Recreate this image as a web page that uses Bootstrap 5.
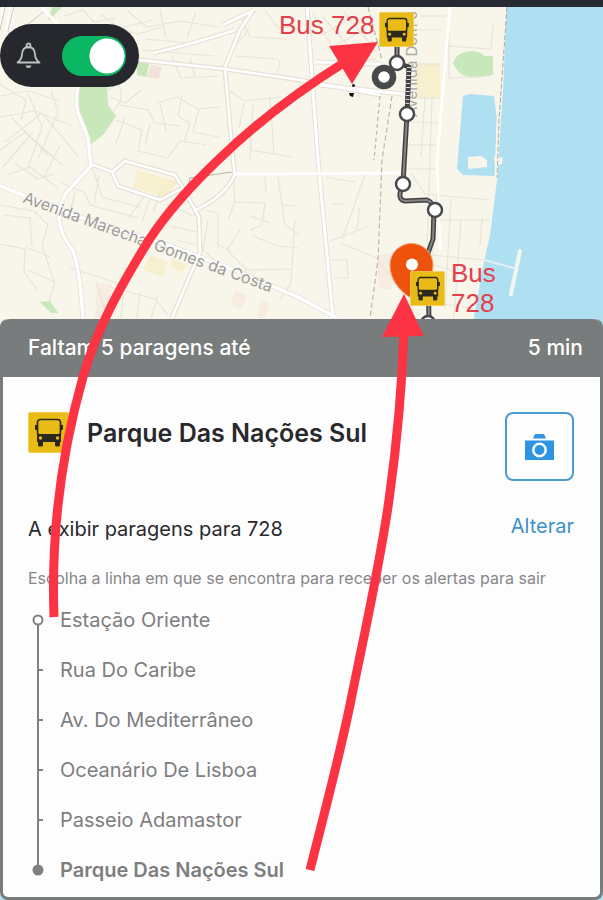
<!DOCTYPE html>
<html lang="pt">
<head>
<meta charset="utf-8">
<meta name="viewport" content="width=device-width, initial-scale=1">
<title>Parque Das Nações Sul</title>
<link rel="stylesheet" href="https://cdn.jsdelivr.net/npm/bootstrap@5.3.0/dist/css/bootstrap.min.css">
<style>
  body { font-family: Inter, "Noto Sans", sans-serif; background: #aee0f2; }
  .status-strip { height: 7px; background: #282a33; }
  .map-area { min-height: 312px; background: #f8f5ea; }
  .map-canvas { top: 0; left: 0; width: 100%; height: 328px; }
  .alert-pill { background: #26282e; width: 139px; height: 63px; margin-top: 17px; padding: 0 13px 0 16px; }
  .alert-pill .form-check-input {
    width: 64px; height: 40px; border: 0; background-color: #0bb763;
    background-image: radial-gradient(circle at 45px 20px, #fff 17px, transparent 18px);
    background-position: 0 0; background-size: 100% 100%;
  }
  .alert-pill .form-check-input:checked { background-image: radial-gradient(circle at 45px 20px, #fff 17px, transparent 18px); background-position: 0 0; }
  .alert-pill .form-check-input:not(:checked) { background-image: radial-gradient(circle at 19px 20px, #fff 17px, transparent 18px); background-color: #777; }
  .street-label { font: 16px Inter, sans-serif; fill: #9c9b99; }
  .street-label-sm { font: 15px Inter, sans-serif; fill: #aaa9a7; }
  .note-label { font: 26px "Liberation Sans", Arial, sans-serif; fill: #e2414b; }
  .stop-panel { background: #fdfdfd; border: 3px solid #797c7c; border-top: 0; border-radius: 8px; }
  .stop-header { background: #797c7c; height: 58px; padding: 0 18px 0 26px; font-size: 21px; font-weight: 500; border-radius: 8px 8px 0 0; margin: 0 -1px; }
  .stop-body { padding: 35px 26px 2px 25px; }
  .stop-title { font-size: 25px; font-weight: 600; line-height: 42px; color: #29292c; padding-left: 18px; }
  .bus-badge { width: 41px; height: 41px; }
  .photo-btn { width: 69px; height: 69px; border: 2px solid #4b9bd2; border-radius: 8px; }
  .line-row { height: 50px; margin-top: 23px; font-size: 20px; color: #29292c; }
  .change-link { color: #3d92c5; padding-bottom: 6px; }
  .hint { margin: 12px 0 5px; font-size: 16px; line-height: 24px; color: #868688; }
  .stop-row { height: 50px; gap: 14px; font-size: 20px; color: #7e7e80; }
  .stop-row svg { width: 18px; height: 50px; flex: none; }
  .arrow-layer { top: 0; left: 0; width: 100%; height: 100%; pointer-events: none; z-index: 5; }
</style>
<script src="https://cdn.jsdelivr.net/npm/bootstrap@5.3.0/dist/js/bootstrap.bundle.min.js"></script>
</head>
<body>
<svg class="d-none" aria-hidden="true">
  <symbol id="bus" viewBox="0 0 41 41">
    <rect x=".5" y=".5" width="40" height="40" rx="1.5" fill="#e9bb17" stroke="#f3cf53"/>
    <rect x="9.5" y="7.5" width="23" height="16" rx="3" fill="none" stroke="#2b291d" stroke-width="1.7"/>
    <path d="M9 22h24v8H9zM10 29h5v4q0 1.500-1.500 1.500h-2q-1.500 0-1.500-1.500zM27 29h5v4q0 1.500-1.500 1.500h-2q-1.500 0-1.500-1.500zM7 13h3v5H8.500Q7 18 7 16.500zM32 13h3v3.500q0 1.500-1.500 1.500H32z" fill="#2b291d"/>
    <circle cx="12.500" cy="26" r="1.700" fill="#e9bb17"/><circle cx="29.500" cy="26" r="1.700" fill="#e9bb17"/>
  </symbol>
</svg>

<div class="position-relative min-vh-100 d-flex flex-column">
  <div class="status-strip"></div>

  <section class="map-area position-relative flex-grow-1" aria-label="Mapa">
    <svg class="map-canvas position-absolute" viewBox="0 7 603 328" preserveAspectRatio="xMidYMid slice">
      <rect y="7" width="603" height="328" fill="#f8f5ea"/>
      <!-- parks and blocks -->
      <g fill="#c9e8b9">
        <path d="M77 84L107 82 108 105 116 116 104 134 90 145 86 125 77 110Z"/>
        <path d="M137 62L150 62 146 77 137 75Z"/>
        <path d="M48 19L52 7 62 7 50 20Z"/>
        <path d="M40 302L50 301 58 313 51 313Z"/>
        <path d="M453 63Q457 52 470 51 480 51 485 56L493 56 493 75 485 76Q478 79 468 77 457 74 453 63Z"/>
      </g>
      <g fill="#f8efcf">
        <path d="M137 170L178 182 165 198 133 187Z"/>
        <path d="M416 63H440V98H416Z"/>
        <path d="M150 255L168 262 163 277 143 270Z"/>
        <path d="M172 259L188 265 182 272 170 267Z"/>
      </g>
      <g fill="#f6ecdf"><path d="M97 283L112 285 108 318H95Z"/><path d="M235 290L247 295 241 309 230 305Z"/><path d="M260 300L270 303 265 318H257Z"/><path d="M378 255L393 252 392 290 378 287Z"/></g>
      <path d="M151 65L162 67 159 79 147 77Z" fill="#f3e2dc"/>
      <!-- minor streets -->
      <g fill="none" stroke="#e8e4d9" stroke-width="1.200">
        <path d="M65 16L83 10 94 22 116 18M78 24Q92 37 112 27L138 34 165 26M100 14L120 28 153 20M127 10L147 27 180 21 219 27M160 10L166 37M196 12L187 38M145 39L190 43M142 50L215 56M172 57L181 78 219 76M190 58L195 76"/>
        <path d="M0 96L28 91 60 101M0 117L35 111 72 126M5 142L42 113 78 156M12 118L48 155M0 150L25 132 63 166M28 93L42 127 28 168M51 90L58 112 38 158M3 167L33 132M60 145L44 177M0 84L26 100 21 120"/>
        <path d="M108 90Q125 78 120 102L113 112M110 97L126 103 141 90M120 105L148 110 155 123 180 126M116 120L142 130 138 151 168 158M125 118L116 143M150 125L145 145M156 103L177 97 198 109 219 107M160 103L166 131M182 96L178 116 190 123 184 142M199 109L193 132 219 137M168 157L180 141 206 145"/>
        <path d="M8 175L30 167 58 188M14 163L38 179 53 174M0 205L34 211 48 225 42 245 55 284M4 215L30 218 32 247M0 244L25 249 24 272 38 291M25 247L50 257M28 270L55 282 49 301M62 183L85 193 90 205 139 218M92 166L102 197 140 207M75 193L70 212M99 175L94 205M145 195L129 218M151 196L142 222M161 190L153 213"/>
        <path d="M70 268L127 286M96 283L108 318M110 287L155 299 168 315M123 294L121 318M140 292L137 318M158 295L151 318M176 240L196 245M173 206L193 216M170 226L196 232"/>
        <path d="M205 210L218 213 218 245 230 250M208 220L203 250 221 266M233 174L235 202 265 203 262 225 250 230M235 202L228 220M265 176L266 193M278 177L285 225 299 235M253 236L277 246 299 248M240 230L227 250 247 270 292 269M282 205L297 206M250 216L270 223M295 219L291 283 280 300"/>
        <path d="M240 15L250 37 287 39M249 29L237 44M265 10L278 28 296 27M236 56L278 59M280 60L277 77M230 91L244 101 281 97M244 103L239 128M253 104L250 160M250 150L292 157M270 97L274 154"/>
        <path d="M313 14L341 61M322 35L356 15M329 49L364 30M339 59L373 41M322 16L364 64M344 12L377 52M318 62L376 59M335 84L358 88 359 98M325 177L355 182M365 175L353 209 342 239M360 206L357 230M331 204H345M330 241L367 227M328 260L347 260 348 279M334 278H348M341 243L377 258 410 304"/>
        <path d="M420 16H445M418 30H443M417 64H440M414 98H440M411 122L438 123M403 145H436M400 169H435M425 98L421 157M432 98L427 250M438 174L433 258M411 173L425 194 491 200M430 220H490M451 198L445 308M461 219L454 318M482 218L480 245M410 253L484 260M435 265L479 280M438 303L474 309M448 46L490 49M493 25L491 49M449 30V78L490 76"/>
      </g>
      <!-- main roads with casing -->
      <g fill="none" stroke="#e5e1d7" stroke-width="5">
        <path d="M0 186L23 195 80 217 170 246 235 270 300 298 337 318"/>
        <path d="M78 84Q75 103 78 113L88 138 91 166 66 193Q60 203 59 219 60 234 73 251 80 270 83 318"/>
        <path d="M91 164L112 172 125 161 175 175 183 188M112 172L118 186 160 200 183 188 199 217 200 252 172 318"/>
        <path d="M223 25L254 10M153 53Q200 42 235 30M139 60L225 69 300 80 380 95M225 69L233 160 235 174Q226 196 194 211M225 67L240 30 254 9"/>
        <path d="M307 7L318 160 333 318M315 62L380 64M320 85L412 95"/>
      </g>
      <g fill="none" stroke="#fff" stroke-width="3.500" stroke-linejoin="round">
        <path d="M0 186L23 195 80 217 170 246 235 270 300 298 337 318"/>
        <path d="M78 84Q75 103 78 113L88 138 91 166 66 193Q60 203 59 219 60 234 73 251 80 270 83 318"/>
        <path d="M91 164L112 172 125 161 175 175 183 188M112 172L118 186 160 200 183 188 199 217 200 252 172 318" stroke-width="2.500"/>
        <path d="M223 25L254 10M153 53Q200 42 235 30M139 60L225 69 300 80 380 95M225 69L233 160 235 174Q226 196 194 211M225 67L240 30 254 9" stroke-width="2.500"/>
        <path d="M307 7L318 160 333 318M315 62L380 64M320 85L412 95M235 174L400 173M42 7L58 25" stroke-width="3"/>
        <path d="M299 297L334 317M450 7L437 160 440 250" stroke-width="2.500"/>
        <path d="M3 7L0 28M10 7L6 30M14 7L10 32" stroke-width="2"/>
      </g>
      <path d="M0 30L5 7M8 31L14 7M25 27L43 12" fill="none" stroke="#cbc7bf"/>
      <g fill="none" stroke="#b9b6af" stroke-width="1.200">
        <path d="M368 7L382 60M392 96L382 160 378 260 370 318" stroke-dasharray="5 3"/>
        <path d="M380 96L374 160" stroke-dasharray="4 3"/>
        <path d="M188 187L190 178 232 172"/>
      </g>
      <!-- river -->
      <path d="M507 0L503 90 501 120 497 180 490 235 484 262 477 300 470 340H640V0Z" fill="#aee0f2"/>
      <path d="M463 96L470 94 494 96 497 119 495 176 463 175 457 169Z" fill="#aee0f2"/>
      <path d="M468 157L481 156 487 160 487 167 468 169Z" fill="#f8f5ea"/>
      <path d="M499 96L496 180" stroke="#f8f5ea" stroke-width="3"/>
      <path d="M494 156L503 158 502 164 495 166Z" fill="#f8f5ea"/>
      <path d="M507 7L499 120 497 178" fill="none" stroke="#aaa9a5" stroke-dasharray="5 2"/>
      <path d="M484 260L514 268" stroke="#e6eff0" stroke-width="2"/>
      <path d="M520 251L511 294" stroke="#f3f5f0" stroke-width="4" stroke-linecap="round"/>
      <!-- street names -->
      <text class="street-label" transform="translate(22 202) rotate(20)">Avenida Marechal Gomes da Costa</text>
      <text class="street-label-sm" transform="translate(417 117) rotate(-90)">Avenida Dom J</text>
      <!-- bus route -->
      <g fill="none" stroke-linecap="round" stroke-linejoin="round">
        <path d="M397 40V63L409 67 407 114 403 184Q396 200 405 201L427 200Q433 202 434 210L433 239 428 253 429 325" stroke="#404143" stroke-width="5"/>
        <path d="M397 40V63M407 114L403 184Q396 200 405 201L427 200Q433 202 434 210L433 239 428 253 429 325" stroke="#858586" stroke-width="2"/>
        <path d="M409 67L407 110" stroke="#dedbd3" stroke-width="4" stroke-dasharray="1 3" stroke-linecap="butt"/>
      </g>
      <g fill="#fff" stroke="#48494b" stroke-width="2.500">
        <circle cx="397" cy="63" r="7"/><circle cx="407" cy="114" r="7"/><circle cx="403" cy="184" r="7"/><circle cx="435" cy="210" r="7"/><circle cx="428" cy="323" r="7"/>
        <circle cx="384" cy="77" r="9" stroke-width="6.500"/>
      </g>
      <path d="M409 297C400 290 390 280 390 265A21 21 0 0 1 433 265C433 280 422 291 409 297Z" fill="#ee530e" stroke="#f39b6b" stroke-width="1"/>
      <circle cx="412" cy="264.500" r="6" fill="#fff"/>
      <use href="#bus" x="379" y="12" width="35" height="35"/>
      <use href="#bus" x="410" y="271" width="35" height="35"/>
      <circle cx="353.500" cy="85.500" r="1.500" fill="#111"/><path d="M349 93L354 93 353 97 350 96Z" fill="#111"/>
      <text class="note-label" x="279" y="34">Bus 728</text>
      <text class="note-label" x="451" y="282">Bus</text>
      <text class="note-label" x="451" y="312">728</text>
    </svg>

    <div class="alert-pill position-relative rounded-pill d-flex align-items-center justify-content-between">
      <svg width="25" height="28" viewBox="0 0 25 28" fill="none" stroke="#bfc0c3" stroke-width="1.800" stroke-linejoin="round" aria-hidden="true">
        <circle cx="12.500" cy="3.500" r="2"/>
        <path d="M1.500 20.500H23.500Q19 17.500 19 12 18.500 5 12.500 5 6.500 5 6 12 6 17.500 1.500 20.500Z"/>
        <path d="M9.500 23.500H15.500Q15 26 12.500 26T9.500 23.500Z" fill="#bfc0c3" stroke="none"/>
      </svg>
      <div class="form-check form-switch p-0 m-0 d-flex">
        <input class="form-check-input m-0 shadow-none" type="checkbox" role="switch" aria-label="Alertas" checked>
      </div>
    </div>
  </section>

  <main class="stop-panel position-relative">
    <header class="stop-header d-flex align-items-center justify-content-between text-white">
      <span>Faltam 5 paragens até</span><span>5 min</span>
    </header>
    <div class="stop-body">
      <div class="d-flex align-items-start">
        <svg class="bus-badge flex-shrink-0" aria-hidden="true"><use href="#bus"/></svg>
        <h1 class="stop-title mb-0 flex-grow-1">Parque Das Nações Sul</h1>
        <button type="button" class="photo-btn btn p-0 d-flex align-items-center justify-content-center" aria-label="Fotografias">
          <svg width="29" height="26" viewBox="0 0 29 26" aria-hidden="true">
            <path d="M8 4.500L9.500 1Q10 0 11 0H18Q19 0 19.500 1L21 4.500ZM0 6.500H29V26H0Z" fill="#2d93e3"/>
            <circle cx="14.500" cy="16" r="6.200" fill="none" stroke="#fff" stroke-width="2.500"/>
          </svg>
        </button>
      </div>
      <div class="line-row d-flex align-items-center justify-content-between">
        <span>A exibir paragens para 728</span>
        <a class="change-link text-decoration-none" href="#">Alterar</a>
      </div>
      <p class="hint">Escolha a linha em que se encontra para receber os alertas para sair</p>
      <ol class="list-unstyled mb-0">
        <li class="stop-row d-flex align-items-center"><svg viewBox="0 0 18 50" fill="none" stroke="#808183" stroke-width="2"><path d="M10 30V50"/><circle cx="10" cy="25" r="4.500"/></svg>Estação Oriente</li>
        <li class="stop-row d-flex align-items-center"><svg viewBox="0 0 18 50" fill="none" stroke="#808183" stroke-width="2"><path d="M10 0V50M10 25H15"/></svg>Rua Do Caribe</li>
        <li class="stop-row d-flex align-items-center"><svg viewBox="0 0 18 50" fill="none" stroke="#808183" stroke-width="2"><path d="M10 0V50M10 25H15"/></svg>Av. Do Mediterrâneo</li>
        <li class="stop-row d-flex align-items-center"><svg viewBox="0 0 18 50" fill="none" stroke="#808183" stroke-width="2"><path d="M10 0V50M10 25H15"/></svg>Oceanário De Lisboa</li>
        <li class="stop-row d-flex align-items-center"><svg viewBox="0 0 18 50" fill="none" stroke="#808183" stroke-width="2"><path d="M10 0V50M10 25H15"/></svg>Passeio Adamastor</li>
        <li class="stop-row d-flex align-items-center fw-semibold"><svg viewBox="0 0 18 50" fill="none" stroke="#808183" stroke-width="2"><path d="M10 0V25"/><circle cx="10" cy="25" r="4.500" fill="#808183"/></svg>Parque Das Nações Sul</li>
      </ol>
    </div>
  </main>

  <!-- annotation arrows -->
  <svg class="arrow-layer position-absolute" viewBox="0 0 603 900" aria-hidden="true">
    <g fill="none" stroke="#fb3343" stroke-width="9">
      <path d="M54 617C51 535 60 458 83 377 97 328 121 285 149 240 170 208 193 184 218 160 254 125 297 92 345 62"/>
      <path d="M310 870C325 810 340 755 351 700 364 635 379 570 389 500 396 450 402 390 404 330"/>
    </g>
    <path d="M378 42L329 46 352 84ZM404 294L382 337 424 336Z" fill="#fb3343"/>
  </svg>
</div>
</body>
</html>
